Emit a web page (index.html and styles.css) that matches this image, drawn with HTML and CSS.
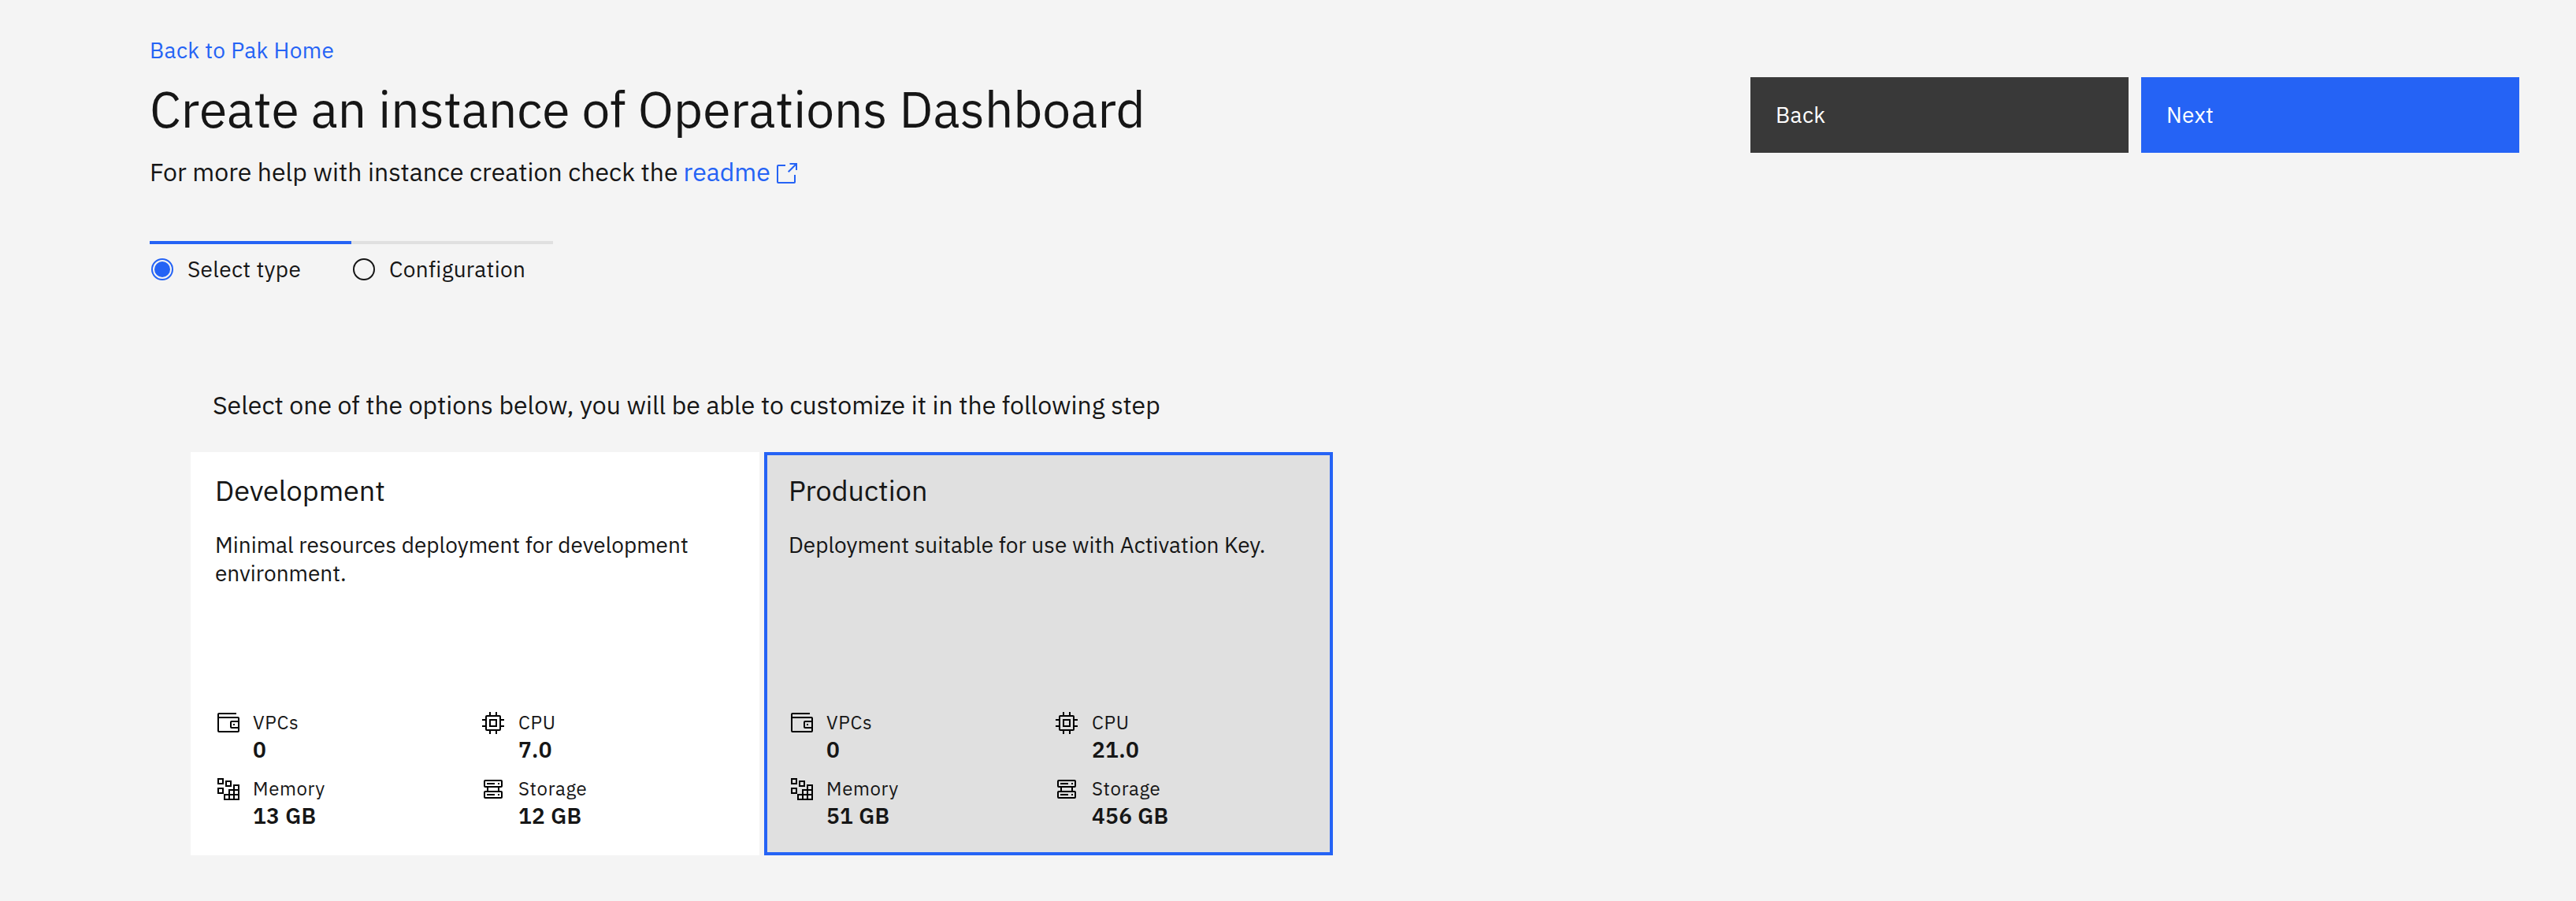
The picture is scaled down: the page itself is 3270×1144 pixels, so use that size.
FILE: index.html
```html
<!DOCTYPE html>
<html lang="en">
<head>
<meta charset="utf-8">
<title>Create an instance</title>
<link rel="stylesheet" href="styles.css">
</head>
<body>
<svg class="sprite" aria-hidden="true">
  <symbol id="wallet" viewBox="0 0 32 32"><path d="M22 17h2v2h-2z"/><path d="M28 8H4V5h22V3H4a2 2 0 0 0-2 2v21a2 2 0 0 0 2 2h24a2 2 0 0 0 2-2V10a2 2 0 0 0-2-2ZM4 26V10h24v3h-8a2 2 0 0 0-2 2v6a2 2 0 0 0 2 2h8v3Zm24-11v6h-8v-6Z"/></symbol>
  <symbol id="chip" viewBox="0 0 32 32"><path d="M11 11v10h10V11Zm8 8h-6v-6h6Z"/><path d="M30 13v-2h-4V8a2 2 0 0 0-2-2h-3V2h-2v4h-6V2h-2v4H8a2 2 0 0 0-2 2v3H2v2h4v6H2v2h4v3a2 2 0 0 0 2 2h3v4h2v-4h6v4h2v-4h3a2 2 0 0 0 2-2v-3h4v-2h-4v-6Zm-6 11H8V8h16Z"/></symbol>
  <symbol id="memory" viewBox="0 0 32 32"><path fill="none" stroke="currentColor" stroke-width="2" d="M3 3h6v6H3zM13 6h6v6h-6zM3 15h6v6H3zM23 11h6v18H11v-6h6v-6h6zM23 17h6M17 23h12M17 23v6M23 17v12"/></symbol>
  <symbol id="storage" viewBox="0 0 32 32"><path fill="none" stroke="currentColor" stroke-width="2" d="M6 5h20a1 1 0 0 1 1 1v6a1 1 0 0 1-1 1H6a1 1 0 0 1-1-1V6a1 1 0 0 1 1-1zM6 19h20a1 1 0 0 1 1 1v6a1 1 0 0 1-1 1H6a1 1 0 0 1-1-1v-6a1 1 0 0 1 1-1zM9 13v6M23 13v6M8 9h10M22 9h2M8 23h10M22 23h2"/></symbol>
</svg>
<main class="page">
  <header class="header">
    <div class="heading">
      <a class="back-link">Back to Pak Home</a>
      <h1 class="title">Create an instance of Operations Dashboard</h1>
      <p class="help">For more help with instance creation check the <a class="readme">readme</a><svg class="launch" viewBox="0 0 26 26"><path d="M11 3H2a1 1 0 0 0-1 1v20a1 1 0 0 0 1 1h20a1 1 0 0 0 1-1v-9M16.500 1H25v8M25 1L14.700 11.300"/></svg></p>
    </div>
    <div class="actions">
      <button class="btn secondary">Back</button>
      <button class="btn primary">Next</button>
    </div>
  </header>
  <ol class="progress">
    <li class="step current"><svg class="dot" viewBox="0 0 28 28"><circle cx="14" cy="14" r="13" fill="none" stroke="currentColor" stroke-width="2"/><circle cx="14" cy="14" r="10" fill="currentColor"/></svg>Select type</li>
    <li class="step"><svg class="dot" viewBox="0 0 28 28"><circle cx="14" cy="14" r="13" fill="none" stroke="currentColor" stroke-width="2"/></svg>Configuration</li>
  </ol>
  <section class="options">
    <p class="intro">Select one of the options below, you will be able to customize it in the following step</p>
    <div class="tiles">
      <article class="tile">
        <h2 class="name">Development</h2>
        <p class="desc">Minimal resources deployment for development environment.</p>
        <dl class="specs">
          <div class="spec"><svg class="icon"><use href="#wallet"/></svg><dt>VPCs</dt><dd>0</dd></div>
          <div class="spec"><svg class="icon"><use href="#chip"/></svg><dt>CPU</dt><dd>7.0</dd></div>
          <div class="spec"><svg class="icon"><use href="#memory"/></svg><dt>Memory</dt><dd>13 GB</dd></div>
          <div class="spec"><svg class="icon"><use href="#storage"/></svg><dt>Storage</dt><dd>12 GB</dd></div>
        </dl>
      </article>
      <article class="tile selected">
        <h2 class="name">Production</h2>
        <p class="desc">Deployment suitable for use with Activation Key.</p>
        <dl class="specs">
          <div class="spec"><svg class="icon"><use href="#wallet"/></svg><dt>VPCs</dt><dd>0</dd></div>
          <div class="spec"><svg class="icon"><use href="#chip"/></svg><dt>CPU</dt><dd>21.0</dd></div>
          <div class="spec"><svg class="icon"><use href="#memory"/></svg><dt>Memory</dt><dd>51 GB</dd></div>
          <div class="spec"><svg class="icon"><use href="#storage"/></svg><dt>Storage</dt><dd>456 GB</dd></div>
        </dl>
      </article>
    </div>
  </section>
</main>
</body>
</html>
```
FILE: styles.css
```css
* { box-sizing: border-box; margin: 0; padding: 0; }
body { background: #f4f4f4; color: #161616; font-family: "IBM Plex Sans", Roboto, sans-serif; font-size: 28px; line-height: 36px; }
.sprite { display: none; }
.page { padding: 46px 72px 58px 190px; }
.header { display: flex; justify-content: space-between; height: 260px; }
.heading { white-space: nowrap; }
.back-link { display: block; color: #2563f5; letter-spacing: .32px; }
.title { margin-top: 16px; font-size: 64px; line-height: 80px; font-weight: 400; }
.help { display: flex; align-items: center; margin-top: 18px; font-size: 32px; line-height: 44px; }
.readme { margin-left: 7px; color: #2563f5; }
.launch { width: 26px; height: 26px; margin: 4px 0 0 8px; fill: none; stroke: #2563f5; stroke-width: 2; }
.actions { display: flex; gap: 16px; padding-top: 52px; }
.btn { width: 480px; height: 96px; padding: 0 32px; border: 0; color: #fff; font: inherit; text-align: left; letter-spacing: .32px; }
.secondary { background: #393939; }
.primary { background: #2563f5; }
.progress { display: flex; list-style: none; }
.step { display: flex; align-items: center; gap: 18px; width: 256px; height: 68px; padding-left: 2px; border-top: 4px solid #e0e0e0; letter-spacing: .32px; }
.step.current { border-color: #2563f5; }
.dot { width: 28px; height: 28px; }
.current .dot { color: #2563f5; }
.options { padding: 118px 0 0 52px; }
.intro { padding-left: 28px; font-size: 32px; line-height: 44px; }
.tiles { display: flex; gap: 6px; margin-top: 38px; }
.tile { display: flex; flex-direction: column; width: 722px; height: 512px; padding: 23px 27px 12px; border: 4px solid #fff; background: #fff; }
.selected { border-color: #2563f5; background: #e0e0e0; }
.name { font-size: 36px; line-height: 44px; font-weight: 400; }
.desc { margin-top: 29px; }
.specs { display: grid; grid-template-columns: 336px 1fr; margin-top: auto; padding-left: 1px; }
.spec { display: grid; grid-template-columns: 32px 1fr; grid-template-rows: 32px 36px; column-gap: 15px; height: 84px; }
.spec:nth-child(even) { column-gap: 16px; }
.icon { width: 32px; height: 32px; fill: #000; color: #000; }
dt { font-size: 24px; letter-spacing: .64px; line-height: 30px; }
dd { grid-column: 2; font-weight: 600; line-height: 36px; letter-spacing: .32px; }
```
